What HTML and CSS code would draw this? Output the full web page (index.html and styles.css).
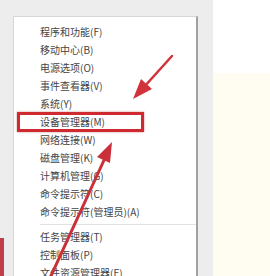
FILE: index.html
```html
<!DOCTYPE html>
<html>
<head>
<meta charset="utf-8">
<link rel="stylesheet" href="styles.css">
</head>
<body>
<div class="page">
  <div class="left">
    <div class="menu">
      <div class="item">程序和功能(F)</div>
      <div class="item">移动中心(B)</div>
      <div class="item">电源选项(O)</div>
      <div class="item">事件查看器(V)</div>
      <div class="item">系统(Y)</div>
      <div class="item">设备管理器(M)</div>
      <div class="item">网络连接(W)</div>
      <div class="item">磁盘管理(K)</div>
      <div class="item">计算机管理(G)</div>
      <div class="item">命令提示符(C)</div>
      <div class="item">命令提示符(管理员)(A)</div>
      <div class="sep"></div>
      <div class="item">任务管理器(T)</div>
      <div class="item">控制面板(P)</div>
      <div class="item">文件资源管理器(E)</div>
    </div>
  </div>
  <div class="right">
    <div class="right-top"></div>
    <div class="right-bottom"></div>
  </div>
  <div class="edge-mark"></div>
  <div class="highlight"></div>
  <svg class="arrows" width="270" height="276" viewBox="0 0 270 276">
    <line x1="172" y1="56" x2="144" y2="87" stroke="#d2323a" stroke-width="2.5" stroke-linecap="round"/>
    <polygon points="133,99 152,89 141,79" fill="#d2323a"/>
    <line x1="50" y1="278" x2="105" y2="158" stroke="#c9303a" stroke-width="3"/>
    <polygon points="112,142 110,163 97,157" fill="#c9303a"/>
  </svg>
</div>
</body>
</html>
```

FILE: styles.css
```css
html, body {
  margin: 0;
  padding: 0;
}
body {
  width: 270px;
  height: 276px;
  overflow: hidden;
  background: #eeeeee;
  font-family: "Noto Sans CJK SC", "Microsoft YaHei", sans-serif;
}
.page {
  position: relative;
  display: flex;
  width: 270px;
  height: 276px;
  overflow: hidden;
}
.left {
  width: 213px;
  flex: none;
  background: #ededed;
  padding: 16px 0 0 13px;
  box-sizing: border-box;
}
.menu {
  width: 185px;
  height: 300px;
  box-sizing: border-box;
  background: #ffffff;
  border-left: 1px solid #d6d6d6;
  border-top: 1px solid #d6d6d6;
  border-right: 2px solid #a0a0a0;
  padding-top: 6px;
}
.item {
  height: 18px;
  line-height: 18px;
  padding-left: 26px;
  font-size: 10px;
  color: #444444;
  white-space: nowrap;
}
.sep {
  height: 1px;
  background: #e2e2e2;
  margin: 3px 0 3px 26px;
}
.right {
  flex: 1;
  display: flex;
  flex-direction: column;
}
.right-top {
  height: 73px;
  background: #ffffff;
}
.right-bottom {
  flex: 1;
  background: #fffdf2;
}
.edge-mark {
  position: absolute;
  left: 0;
  top: 238px;
  width: 4px;
  height: 40px;
  background: #c0404a;
}
.highlight {
  position: absolute;
  left: 17px;
  top: 112px;
  width: 127px;
  height: 20px;
  box-sizing: border-box;
  border: 3px solid #cf2a30;
  box-shadow: 0 0 2px rgba(160, 30, 30, 0.5);
}
.arrows {
  position: absolute;
  left: 0;
  top: 0;
}
```
